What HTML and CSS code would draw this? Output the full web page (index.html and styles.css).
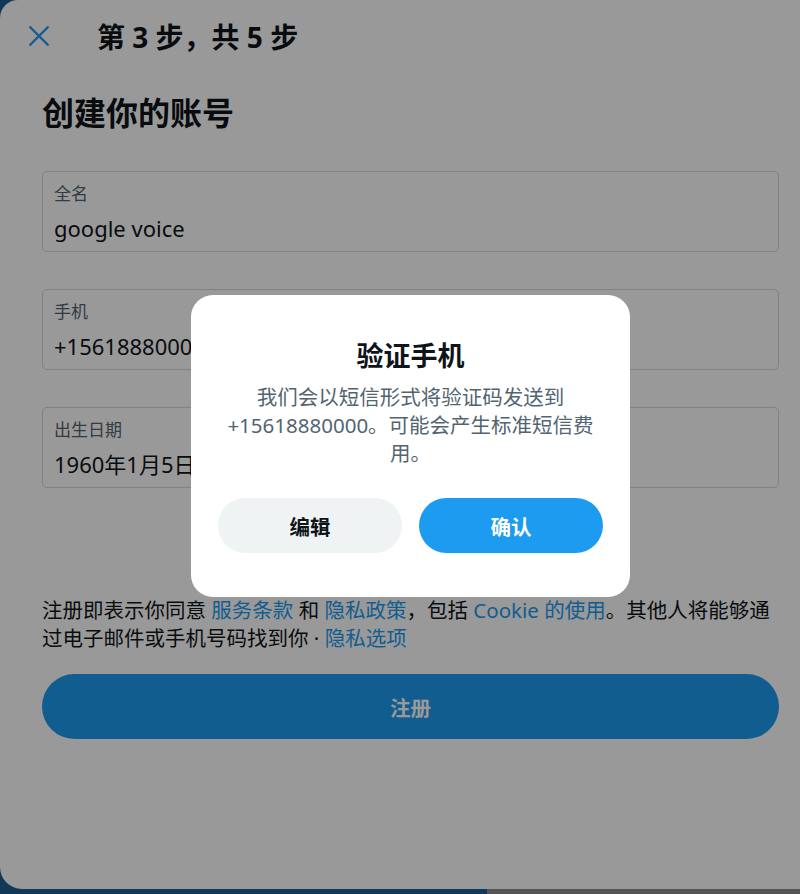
FILE: index.html
```html
<html>
<head>
<meta http-equiv="Content-Type" content="text/html; charset=utf-8"/>
<link rel="stylesheet" href="styles.css">
</head>
<body>
<div class="panel">
  <div class="top">
    <a class="close" href="#"><svg width="22" height="22" viewBox="0 0 22 22"><path d="M1.5 1.5L20.5 20.5M20.5 1.5L1.5 20.5" stroke="#1d9bf0" stroke-width="2.3" fill="none"/></svg></a>
    <div class="step">第 3 步，共 5 步</div>
  </div>
  <h1>创建你的账号</h1>
  <div class="field">
    <div class="label">全名</div>
    <div class="value">google voice</div>
  </div>
  <div class="field">
    <div class="label">手机</div>
    <div class="value">+15618880000</div>
  </div>
  <div class="field">
    <div class="label">出生日期</div>
    <div class="value">1960年1月5日</div>
  </div>
  <p class="terms">注册即表示你同意 <a href="#">服务条款</a> 和 <a href="#">隐私政策</a>，包括 <a href="#">Cookie 的使用</a>。其他人将能够通过电子邮件或手机号码找到你 · <a href="#">隐私选项</a></p>
  <div class="signup">注册</div>
</div>

<div class="mask">
  <div class="dialog">
    <div class="title">验证手机</div>
    <p class="text">我们会以短信形式将验证码发送到 +15618880000。可能会产生标准短信费用。</p>
    <div class="buttons">
      <div class="btn edit">编辑</div>
      <div class="btn ok">确认</div>
    </div>
  </div>
</div>
</body>
</html>
```

FILE: styles.css
```css
body{
padding:0;margin:0;
height:894px;
overflow:hidden;
background:linear-gradient(to right,#1b5f95 0,#1b5f95 487px,#8e8e8e 487px);
font-family:"Noto Sans","Noto Sans CJK SC",sans-serif;
color:#0f1419;
}
a{
color:#1d9bf0;
text-decoration:none;
}
.panel{
background:#fff;
height:889px;
margin-right:-40px;
border-radius:18px 0 0 22px;
padding:0 61px 0 42px;
box-sizing:border-box;
}
.top{
display:flex;
align-items:center;
height:52px;
padding-top:10px;
margin-left:-14px;
}
.close{
display:flex;
padding:0;
}
.step{
font-size:28px;
font-weight:bold;
margin-left:47px;
}
h1{
font-size:32px;
line-height:40px;
margin:31px 0 38px;
}
.field{
border:1px solid #cfd9de;
border-radius:5px;
padding:12px 11px 9px;
margin-bottom:37px;
}
.label{
font-size:17px;
line-height:20px;
color:#536471;
}
.value{
font-size:22px;
line-height:28px;
margin-top:10px;
}
.terms{
font-size:20.5px;
line-height:28px;
margin:108px 0 22px;
}
.signup{
background:#1d9bf0;
color:#fff;
height:65px;
border-radius:33px;
display:flex;
align-items:center;
justify-content:center;
font-size:20.5px;
font-weight:bold;
}
.mask{
position:fixed;
top:0;left:0;right:0;bottom:0;
background:rgba(0,0,0,0.4);
display:flex;
align-items:center;
justify-content:center;
}
.dialog{
background:#fff;
width:439px;
box-sizing:border-box;
border-radius:22px;
padding:45px 27px 44px;
margin-left:21px;
margin-top:-2px;
text-align:center;
}
.title{
font-size:27px;
line-height:32px;
font-weight:bold;
}
.text{
font-size:20.5px;
line-height:28px;
color:#536471;
margin:11px 6px 31px;
}
.buttons{
display:flex;
gap:17px;
}
.btn{
flex:1;
height:55px;
border-radius:28px;
display:flex;
align-items:center;
justify-content:center;
font-size:20.5px;
font-weight:bold;
}
.edit{
background:#eff3f4;
}
.ok{
background:#1d9bf0;
color:#fff;
}
```
